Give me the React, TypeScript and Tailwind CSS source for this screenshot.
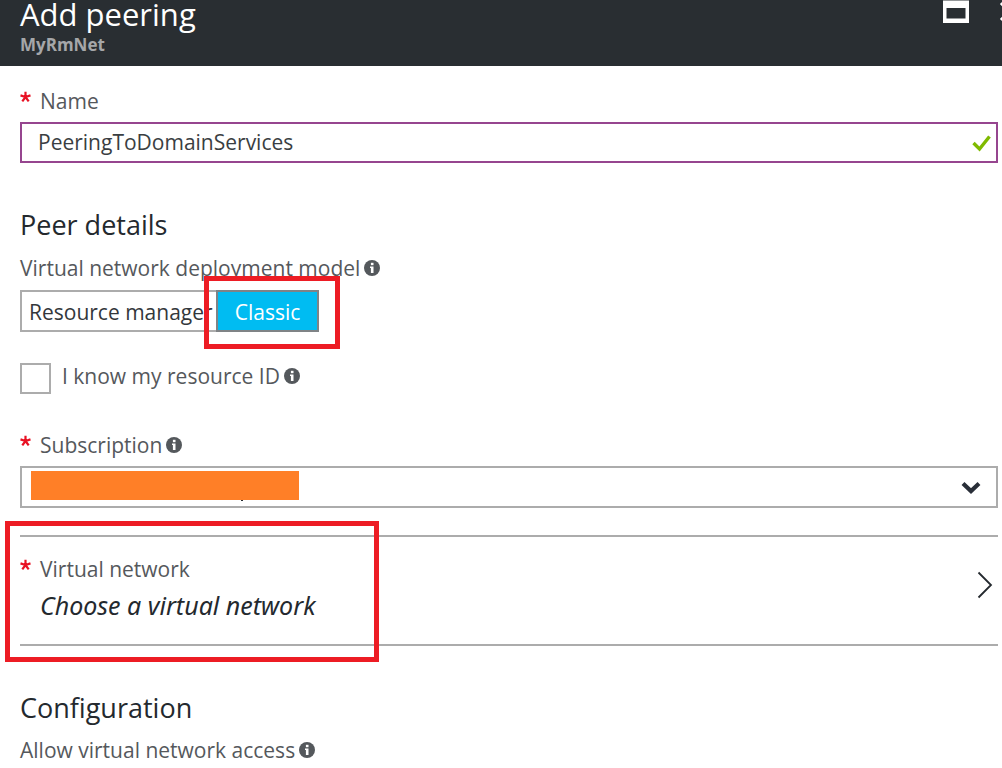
import React, { useState } from "react";

function InfoIcon() {
  return (
    <svg viewBox="0 0 16 16" className="h-4 w-4 shrink-0" aria-hidden="true">
      <circle cx="8" cy="8" r="8" fill="#54585c" />
      <rect x="6.900" y="2.800" width="2.600" height="2.400" fill="#fff" />
      <path d="M6 6.500h3.500v6.500H6.900V8H6z" fill="#fff" />
    </svg>
  );
}

function Required() {
  return (
    <svg viewBox="0 0 12 12" className="mt-1 h-3 w-3 shrink-0 self-start" role="img" aria-label="required">
      <path
        d="M5.500 6V.8M5.500 6l5-1.600M5.500 6l3.200 4.400M5.500 6l-3.200 4.400M5.500 6L.5 4.400"
        stroke="#e81123"
        strokeWidth="2.200"
        fill="none"
      />
    </svg>
  );
}

const labelText = "text-[21px] leading-7 text-[#55585c]";

export default function App() {
  const [name, setName] = useState("PeeringToDomainServices");
  const [model, setModel] = useState("classic");

  return (
    <div className="min-h-screen overflow-hidden bg-white font-['Open_Sans','Noto_Sans',sans-serif] text-[#24292e]">
      <header className="flex items-start justify-between overflow-hidden bg-[#292e32] pb-3 pl-5">
        <div>
          <h1 className="text-[31px] leading-7 text-white">Add peering</h1>
          <p className="mt-2 text-[17px] leading-[18px] font-bold text-[#a5a7a9]">MyRmNet</p>
        </div>
        <div className="-mr-4 flex items-start gap-[30px]">
          <button type="button" aria-label="Maximize" className="block">
            <svg viewBox="0 0 27 23" className="h-[23px] w-[27px]">
              <path d="M1 .5h26V23H1zM4.500 8v10.500h19V8z" fill="#fff" fillRule="evenodd" />
            </svg>
          </button>
          <button type="button" aria-label="Close" className="mt-[2px] block">
            <svg viewBox="0 0 19 19" className="h-[19px] w-[19px]">
              <path d="M2 1l16 17M18 1L2 18" stroke="#fff" strokeWidth="3" />
            </svg>
          </button>
        </div>
      </header>

      <main className="pt-[21px] pr-1 pl-5">
        <div className="flex gap-2">
          <Required />
          <label htmlFor="name" className={labelText}>Name</label>
        </div>
        <div className="mt-[7px] flex h-[41px] items-center border-2 border-[#96458f] pr-1 pl-4">
          <input
            id="name"
            value={name}
            onChange={(e) => setName(e.target.value)}
            className="h-full min-w-0 flex-1 bg-transparent pb-px text-[21px] text-[#3a3e42] outline-none"
          />
          <svg viewBox="0 0 20 18" className="h-[18px] w-5" aria-hidden="true">
            <path d="M1.500 9l6 6L17.500 2.500" fill="none" stroke="#7fba00" strokeWidth="3.400" />
          </svg>
        </div>

        <h2 className="mt-11 text-[27px] leading-9">Peer details</h2>
        <div className={`mt-[11px] flex items-center gap-1 ${labelText}`}>
          <span id="model">Virtual network deployment model</span>
          <InfoIcon />
        </div>
        <div role="group" aria-labelledby="model" className="mt-2 flex h-[42px]">
          <button
            type="button"
            aria-pressed={model === "manager"}
            onClick={() => setModel("manager")}
            className="w-[196px] border-2 border-r-0 border-[#acacac] pt-1 pl-[7px] text-left text-[21px] whitespace-nowrap text-[#33373b]"
          >
            Resource manager
          </button>
          <div className="relative">
            <button
              type="button"
              aria-pressed={model === "classic"}
              onClick={() => setModel("classic")}
              className="h-full w-[103px] border-2 border-[#7f8386] bg-[#00bcf2] pt-1 text-[21px] text-white"
            >
              Classic
            </button>
            <div className="pointer-events-none absolute -top-[14px] -right-[21px] -bottom-[17px] -left-3 border-5 border-[#ed1c24]" />
          </div>
        </div>

        <div className="mt-[31px] flex h-[31px] gap-[11px]">
          <input
            id="known"
            type="checkbox"
            className="h-[31px] w-[31px] shrink-0 appearance-none border-2 border-[#acacac] bg-white checked:bg-[#00bcf2]"
          />
          <div className={`flex h-[26px] items-center gap-1 ${labelText}`}>
            <label htmlFor="known">I know my resource ID</label>
            <InfoIcon />
          </div>
        </div>

        <div className="mt-[37px] flex gap-2">
          <Required />
          <div className={`flex items-center gap-1 ${labelText}`}>
            <label htmlFor="subscription">Subscription</label>
            <InfoIcon />
          </div>
        </div>
        <div className="relative mt-[7px] h-[42px]">
          <select
            id="subscription"
            className="h-full w-full appearance-none border-2 border-[#acacac] bg-white px-3 text-[21px]"
          >
            <option value="" />
          </select>
          <div className="pointer-events-none absolute top-[5px] left-[11px] h-[29px] w-[268px] bg-[#ff7f27]" />
          <div className="pointer-events-none absolute top-[34px] left-[221px] h-px w-[2px] bg-[#24292e]" />
          <svg viewBox="0 0 20 14" className="pointer-events-none absolute top-[15px] right-[17px] h-[14px] w-5" aria-hidden="true">
            <path d="M2 2.500l8 7.500 8-7.500" fill="none" stroke="#292e38" strokeWidth="4.200" />
          </svg>
        </div>

        <div className="relative mt-[27px]">
          <button
            type="button"
            className="flex h-[111px] w-full items-start justify-between border-y-2 border-[#acacac] pt-[18px] pr-[5px] text-left"
          >
            <span className="flex gap-2">
              <Required />
              <span className="flex flex-col gap-2">
                <span className={labelText}>Virtual network</span>
                <span className="font-['Noto_Sans','Open_Sans',sans-serif] text-[25px] leading-7 italic">
                  Choose a virtual network
                </span>
              </span>
            </span>
            <svg viewBox="0 0 16 28" className="mt-4 h-7 w-4" aria-hidden="true">
              <path d="M1.500 1.500L14 14 1.500 26.500" fill="none" stroke="#24292e" strokeWidth="1.800" />
            </svg>
          </button>
          <div className="pointer-events-none absolute -top-[14px] -bottom-4 -left-[15px] w-[374px] border-5 border-[#ed1c24]" />
        </div>

        <h2 className="mt-11 text-[27px] leading-9">Configuration</h2>
        <div className={`mt-[10px] flex items-center gap-1 ${labelText}`}>
          <span>Allow virtual network access</span>
          <InfoIcon />
        </div>
      </main>
    </div>
  );
}
